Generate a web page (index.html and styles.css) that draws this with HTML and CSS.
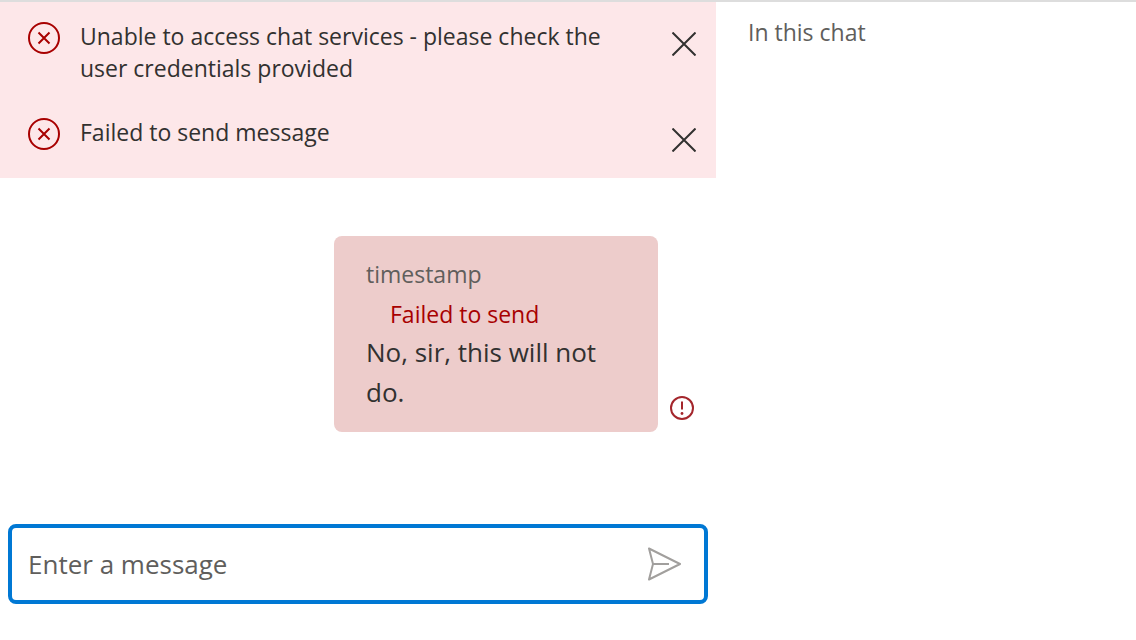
FILE: index.html
```html
<!DOCTYPE html>
<html lang="en">
<head>
<meta charset="utf-8">
<title>Chat</title>
<link rel="stylesheet" href="styles.css">
</head>
<body>
<div class="app">
  <main class="chat">
    <section class="errors" aria-label="Errors">
      <div class="error" role="alert">
        <svg class="error-icon" viewBox="0 0 32 32" aria-hidden="true"><circle cx="16" cy="16" r="15"/><path d="M10.5 10.5l11 11M21.5 10.5l-11 11"/></svg>
        <p class="error-text">Unable to access chat services - please check the user credentials provided</p>
        <button class="dismiss" type="button" aria-label="Close"><svg viewBox="0 0 24 24" aria-hidden="true"><path d="M0.5 0.5l23 23M23.5 0.5l-23 23"/></svg></button>
      </div>
      <div class="error" role="alert">
        <svg class="error-icon" viewBox="0 0 32 32" aria-hidden="true"><circle cx="16" cy="16" r="15"/><path d="M10.5 10.5l11 11M21.5 10.5l-11 11"/></svg>
        <p class="error-text">Failed to send message</p>
        <button class="dismiss" type="button" aria-label="Close"><svg viewBox="0 0 24 24" aria-hidden="true"><path d="M0.5 0.5l23 23M23.5 0.5l-23 23"/></svg></button>
      </div>
    </section>
    <section class="thread" aria-label="Messages">
      <article class="message">
        <div class="message-meta">
          <time class="timestamp">timestamp</time>
          <span class="status">Failed to send</span>
        </div>
        <p class="message-text">No, sir, this will not do.</p>
      </article>
      <svg class="failed-icon" viewBox="0 0 24 24" role="img" aria-label="Failed to send"><circle cx="12" cy="12" r="11"/><path d="M12 5.5v8"/><circle class="dot" cx="12" cy="17.5" r="1.4"/></svg>
    </section>
    <form class="composer">
      <input class="composer-input" type="text" placeholder="Enter a message" aria-label="Enter a message">
      <button class="send" type="button" aria-label="Send message"><svg viewBox="0 0 34 34" aria-hidden="true"><path d="M1 1.500L32 17L1 32.500L5 17ZM5 17H21"/></svg></button>
    </form>
  </main>
  <aside class="people">
    <h2 class="people-title">In this chat</h2>
  </aside>
</div>
</body>
</html>
```
FILE: styles.css
```css
* {
  box-sizing: border-box;
}

body {
  margin: 0;
  background: #fff;
  color: #323130;
  font-family: "Segoe UI", "Open Sans", "Noto Sans", sans-serif;
  font-size: 23px;
  line-height: 32px;
}

p,
h2 {
  margin: 0;
}

button {
  display: flex;
  align-items: center;
  justify-content: center;
  padding: 0;
  border: 0;
  background: none;
  cursor: pointer;
}

svg {
  display: block;
  flex: none;
  fill: none;
  stroke-width: 2;
}

.app {
  display: grid;
  grid-template-columns: minmax(0, 1fr) 420px;
  min-height: 100vh;
  border-top: 2px solid #dddddd;
}

.chat {
  display: flex;
  flex-direction: column;
}

.errors {
  padding: 2px 0 6px;
  background: #fde7e9;
}

.error {
  display: flex;
  align-items: flex-start;
  padding: 16px 16px 16px 28px;
}

.error-icon {
  width: 32px;
  height: 32px;
  margin: 2px 20px 0 0;
  stroke: #a80000;
}

.error-text {
  flex: 1;
  padding-right: 64px;
}

.dismiss {
  width: 32px;
  height: 32px;
  margin-top: 8px;
}

.dismiss svg {
  width: 24px;
  height: 24px;
  stroke: #323130;
}

.thread {
  display: flex;
  flex: 1;
  align-items: flex-end;
  align-self: flex-end;
  gap: 12px;
  padding: 58px 22px 92px 16px;
}

.message {
  width: 324px;
  padding: 22px 32px 20px;
  border-radius: 8px;
  background: #edcccb;
}

.message-meta {
  display: flex;
  flex-wrap: wrap;
  row-gap: 8px;
  margin-bottom: 2px;
}

.timestamp {
  margin-right: 24px;
  color: #605e5c;
}

.status {
  margin-left: 24px;
  color: #a80000;
}

.message-text {
  font-size: 26px;
  line-height: 40px;
}

.failed-icon {
  width: 24px;
  height: 24px;
  margin-bottom: 12px;
  stroke: #a4262c;
}

.failed-icon .dot {
  fill: #a4262c;
  stroke: none;
}

.composer {
  display: flex;
  align-items: center;
  height: 80px;
  margin: 0 8px 36px;
  padding: 0 22px 0 16px;
  border: 4px solid #0078d4;
  border-radius: 8px;
}

.composer-input {
  flex: 1;
  min-width: 0;
  padding: 0;
  border: 0;
  outline: 0;
  background: none;
  color: #323130;
  font: inherit;
  font-size: 26px;
  line-height: 40px;
}

.composer-input::placeholder {
  color: #605e5c;
  opacity: 1;
}

.send svg {
  width: 34px;
  height: 34px;
  stroke: #a19f9d;
  stroke-linejoin: round;
}

.people {
  padding: 14px 32px;
}

.people-title {
  color: #605e5c;
  font-size: 23px;
  font-weight: 400;
}
```
